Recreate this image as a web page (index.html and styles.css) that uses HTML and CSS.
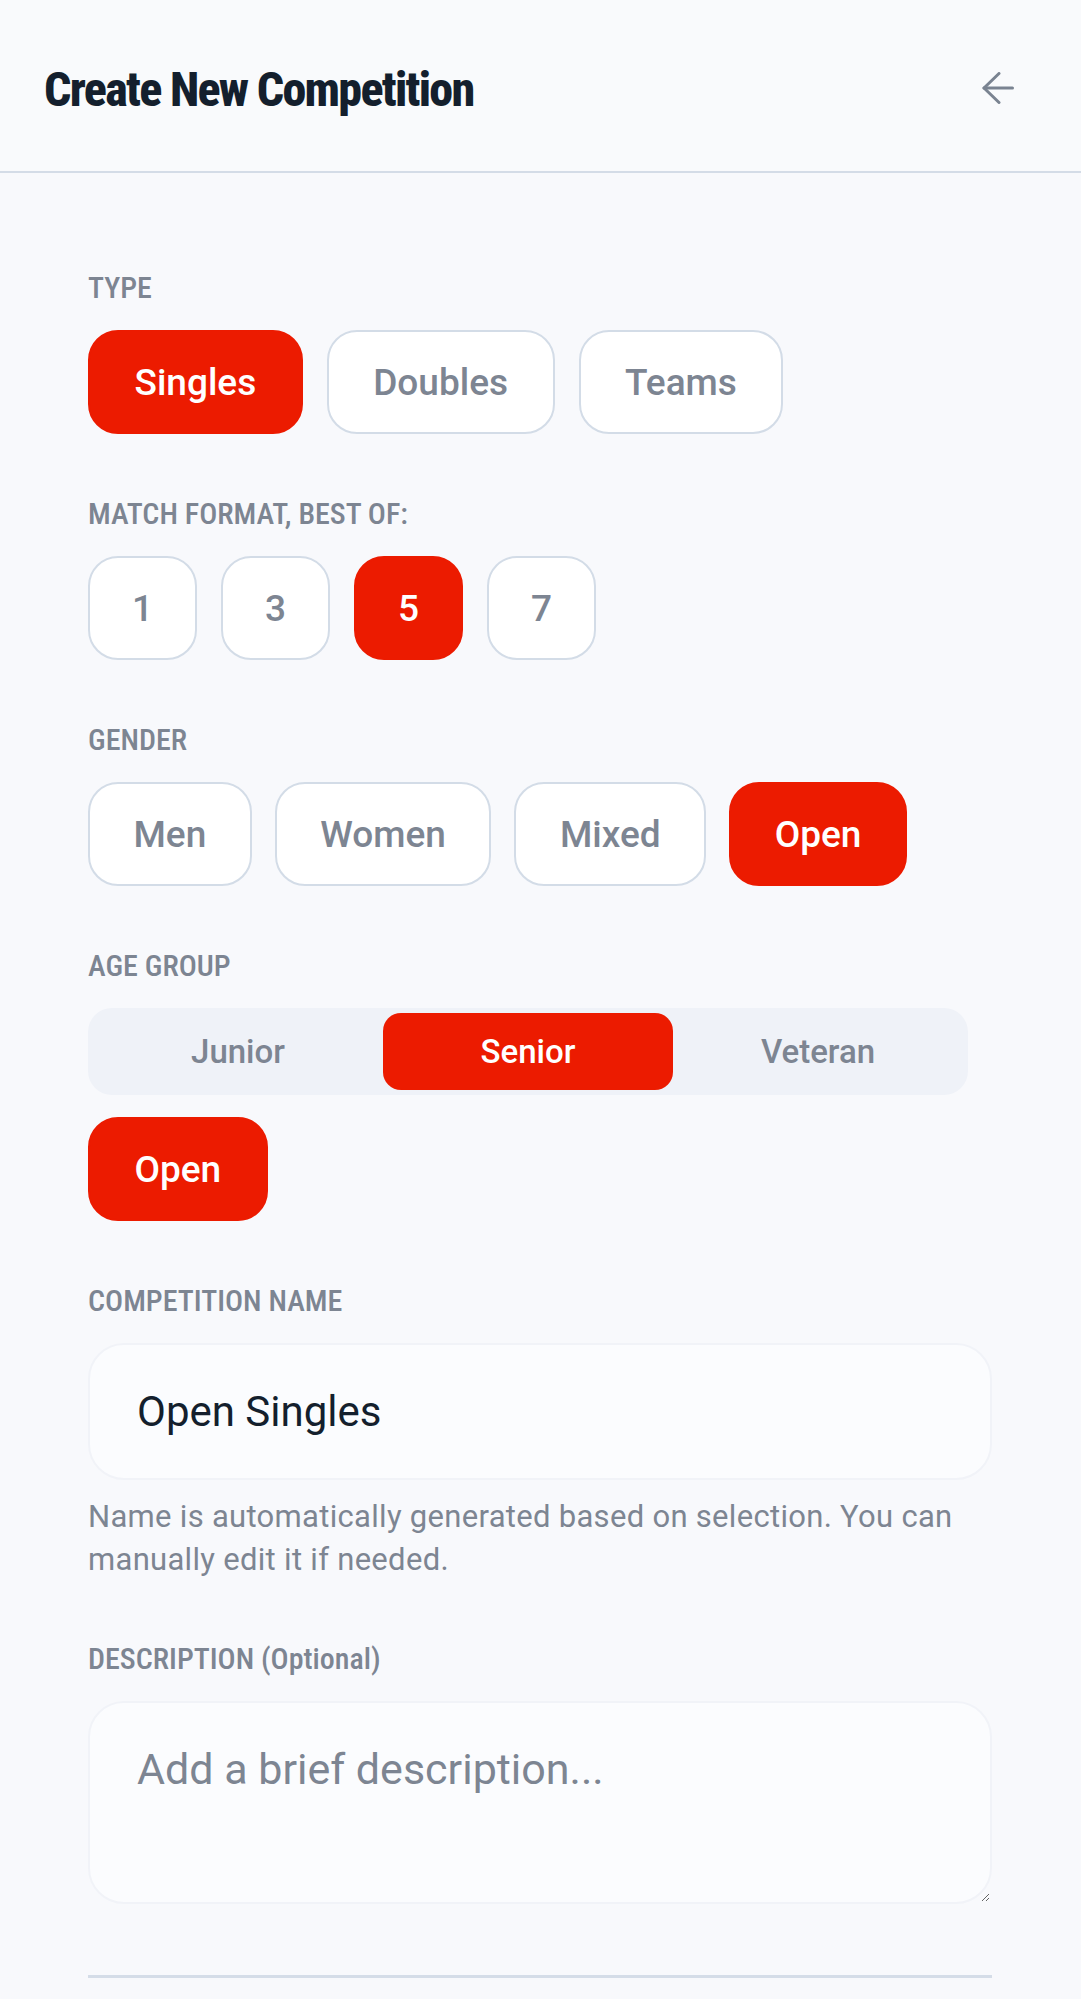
FILE: index.html
```html
<!DOCTYPE html>
<html lang="en">
<head>
<meta charset="utf-8">
<title>Create New Competition</title>
<link rel="stylesheet" href="styles.css">
</head>
<body>
<header class="topbar">
  <h1 class="title">Create New Competition</h1>
  <button class="back" aria-label="Back">
    <svg width="32" height="32" viewBox="0 0 32 32" fill="none" stroke="currentColor" stroke-width="3" stroke-linecap="round" stroke-linejoin="round">
      <path d="M2 16H30.5"/>
      <path d="M17 1.5L2 16L17 30.5"/>
    </svg>
  </button>
</header>

<main class="form">
  <section class="field">
    <div class="label">TYPE</div>
    <div class="chips">
      <button class="chip active">Singles</button>
      <button class="chip">Doubles</button>
      <button class="chip">Teams</button>
    </div>
  </section>

  <section class="field">
    <div class="label">MATCH FORMAT, BEST OF:</div>
    <div class="chips">
      <button class="chip num">1</button>
      <button class="chip num">3</button>
      <button class="chip num active">5</button>
      <button class="chip num">7</button>
    </div>
  </section>

  <section class="field">
    <div class="label">GENDER</div>
    <div class="chips compact">
      <button class="chip">Men</button>
      <button class="chip">Women</button>
      <button class="chip">Mixed</button>
      <button class="chip active">Open</button>
    </div>
  </section>

  <section class="field">
    <div class="label">AGE GROUP</div>
    <div class="segmented">
      <button class="seg">Junior</button>
      <button class="seg active">Senior</button>
      <button class="seg">Veteran</button>
    </div>
    <div class="chips below">
      <button class="chip active">Open</button>
    </div>
  </section>

  <section class="field">
    <div class="label">COMPETITION NAME</div>
    <input class="input" type="text" value="Open Singles">
    <p class="hint">Name is automatically generated based on selection. You can manually edit it if needed.</p>
  </section>

  <section class="field">
    <div class="label">DESCRIPTION (Optional)</div>
    <textarea class="textarea" placeholder="Add a brief description..."></textarea>
  </section>

  <div class="divider"></div>
</main>
</body>
</html>
```
FILE: styles.css
```css
* {
  box-sizing: border-box;
}

html, body {
  margin: 0;
  padding: 0;
  background: #f8f9fc;
}

body {
  font-family: "Roboto", "Liberation Sans", sans-serif;
  color: #141f2d;
}

button {
  font-family: inherit;
  cursor: pointer;
}

.topbar {
  height: 173px;
  padding: 8px 67px 0 44px;
  display: flex;
  align-items: center;
  justify-content: space-between;
  border-bottom: 2px solid #d4dce7;
  background: #f9fafc;
}

.title {
  margin: 0;
  font-family: "Roboto Condensed", "Roboto", sans-serif;
  font-weight: 800;
  font-size: 48px;
  line-height: 56px;
  letter-spacing: -1.7px;
  color: #141f2d;
}

.back {
  width: 32px;
  height: 32px;
  padding: 0;
  margin: 0 0 3px 0;
  border: 0;
  background: transparent;
  color: #7a8391;
  display: flex;
}

.form {
  padding: 95px 89px 0 88px;
  display: flex;
  flex-direction: column;
  gap: 60px;
}

.field {
  display: flex;
  flex-direction: column;
}

.label {
  font-family: "Roboto Condensed", "Roboto", sans-serif;
  font-weight: 500;
  font-size: 30px;
  line-height: 40px;
  letter-spacing: 0;
  color: #7d8592;
  margin-bottom: 22px;
}

.chips {
  display: flex;
  gap: 24px;
}

.chips.compact {
  gap: 23px;
}

.chips.below {
  margin-top: 22px;
}

.chip {
  height: 104px;
  padding: 0 44.5px;
  border: 2px solid #d3dce7;
  border-radius: 30px;
  background: #ffffff;
  color: #7d8592;
  font-size: 37px;
  font-weight: 500;
  line-height: 1;
}

.chips.compact .chip {
  padding: 0 43.5px;
}

.chip.num {
  padding: 0 42px;
}

.chip.active {
  background: #ec1b00;
  border-color: #ec1b00;
  color: #ffffff;
}

.segmented {
  width: 880px;
  height: 87px;
  padding: 5px;
  border-radius: 24px;
  background: #eff2f8;
  display: grid;
  grid-template-columns: repeat(3, 1fr);
}

.seg {
  border: 0;
  border-radius: 18px;
  background: transparent;
  color: #7d8592;
  font-size: 33px;
  font-weight: 500;
}

.seg.active {
  background: #ec1b00;
  color: #ffffff;
}

.input {
  width: 100%;
  height: 137px;
  padding: 0 47px;
  border: 2px solid #f1f3f8;
  border-radius: 36px;
  background: #fbfcfe;
  font-family: "Roboto", sans-serif;
  font-size: 42px;
  color: #141f2d;
  outline: none;
}

.hint {
  margin: 15px 0 0;
  font-size: 31px;
  line-height: 43px;
  letter-spacing: 0.3px;
  color: #7d8592;
}

.field:has(.hint) + .field {
  margin-top: -2px;
}

.textarea {
  display: block;
  width: 100%;
  height: 203px;
  padding: 41px 47px;
  border: 2px solid #f1f3f8;
  border-radius: 36px;
  background: #fbfcfe;
  font-family: "Roboto", sans-serif;
  font-size: 43px;
  line-height: 1.2;
  color: #141f2d;
  outline: none;
}

.textarea::placeholder {
  color: #7d8592;
}

.divider {
  margin-top: 11px;
  height: 3px;
  background: #d5dde8;
}
```
